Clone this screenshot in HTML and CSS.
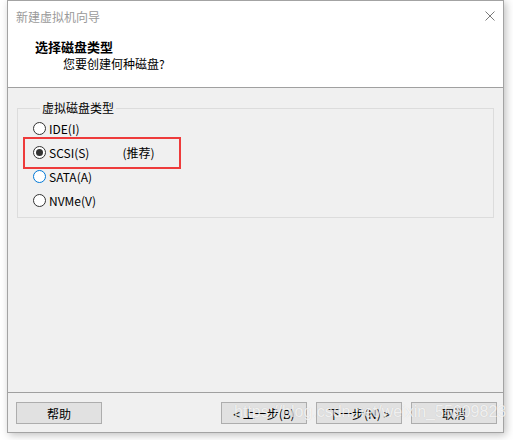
FILE: index.html
```html
<!DOCTYPE html>
<html lang="zh-CN">
<head>
    <meta charset="UTF-8">
    <title>新建虚拟机向导</title>
    <link rel="stylesheet" href="styles.css">
</head>
<body>
    <div class="wizard">
        <div class="wizard-header">
            <div class="title-bar">
                <span class="title">新建虚拟机向导</span>
                <svg class="close" viewBox="0 0 10 10">
                    <path d="M0.5 0.5 L9.5 9.5 M9.5 0.5 L0.5 9.5"></path>
                </svg>
            </div>
            <div class="step-title">选择磁盘类型</div>
            <div class="step-desc">您要创建何种磁盘?</div>
        </div>

        <div class="wizard-body">
            <fieldset class="group">
                <legend>虚拟磁盘类型</legend>
                <label class="radio"><span class="dot"></span>IDE(I)</label>
                <label class="radio checked"><span class="dot"></span>SCSI(S)<span class="hint">(推荐)</span><span class="mark"></span></label>
                <label class="radio focus"><span class="dot"></span>SATA(A)</label>
                <label class="radio"><span class="dot"></span>NVMe(V)</label>
            </fieldset>
        </div>

        <div class="wizard-footer">
            <button class="btn">帮助</button>
            <div class="spacer"></div>
            <button class="btn">&lt; 上一步(B)</button>
            <button class="btn">下一步(N) &gt;</button>
            <button class="btn cancel">取消</button>
            <div class="watermark">https://blog.csdn.net/weixin_55609823</div>
        </div>
    </div>
</body>
</html>
```

FILE: styles.css
```css
* {
    margin: 0;
    padding: 0;
    box-sizing: border-box;
    font-family: "Noto Sans CJK SC", "Open Sans", sans-serif;
}

body {
    background-color: #ffffff;
    width: 513px;
    height: 440px;
    overflow: hidden;
}

.wizard {
    margin-left: 7px;
    width: 497px;
    height: 433px;
    border: 1px solid #a3a3a3;
    background-color: #f0f0f0;
    box-shadow: 2px 2px 8px rgba(0, 0, 0, 0.25);
    display: flex;
    flex-direction: column;
    position: relative;
}

.wizard-header {
    background-color: #ffffff;
    height: 87px;
    border-bottom: 1px solid #a0a0a0;
}

.title-bar {
    display: flex;
    align-items: center;
    justify-content: space-between;
    height: 30px;
    padding: 0 8px 0 8px;
}

.title {
    font-size: 12px;
    color: #9a9a9a;
}

.close {
    width: 10px;
    height: 10px;
    stroke: #7a7a7a;
    stroke-width: 1;
    fill: none;
}

.step-title {
    margin: 7px 0 0 27px;
    font-size: 13px;
    font-weight: bold;
    color: #000;
    line-height: 17px;
}

.step-desc {
    margin: 0 0 0 55px;
    font-size: 12px;
    color: #000;
    line-height: 17px;
}

.wizard-body {
    flex: 1;
    padding: 12px 9px 0 9px;
}

.group {
    border: 1px solid #dcdcdc;
    height: 118px;
    padding: 0 0 0 15px;
}

.group legend {
    font-size: 12px;
    color: #000;
    padding: 0 2px;
    margin-left: 7px;
    line-height: 16px;
}

.radio {
    position: relative;
    display: flex;
    align-items: center;
    height: 24px;
    font-size: 12px;
    color: #000;
}

.dot {
    width: 13px;
    height: 13px;
    border: 1px solid #333;
    border-radius: 50%;
    background-color: #fff;
    margin-right: 3px;
    display: flex;
    align-items: center;
    justify-content: center;
}

.checked .dot::after {
    content: "";
    width: 7px;
    height: 7px;
    border-radius: 50%;
    background-color: #333;
}

.focus .dot {
    border-color: #0078d7;
}

.hint {
    margin-left: 33px;
}

.mark {
    position: absolute;
    left: -10px;
    top: -3px;
    width: 158px;
    height: 32px;
    border: 2px solid #ee3b3b;
}

.wizard-footer {
    position: relative;
    height: 40px;
    border-top: 1px solid #a0a0a0;
    display: flex;
    align-items: flex-start;
    gap: 10px;
    padding: 9px 6px 0 8px;
}

.spacer {
    flex: 1;
}

.btn {
    width: 86px;
    height: 22px;
    border: 1px solid #adadad;
    background-color: #e1e1e1;
    font-size: 12px;
    color: #000;
}

.wizard-footer .btn + .btn {
    margin-left: -1px;
}

.wizard-footer .cancel {
    margin-left: 1px;
}

.watermark {
    position: absolute;
    left: 226px;
    top: 10px;
    font-family: "Liberation Sans", sans-serif;
    font-size: 16px;
    color: rgba(255, 255, 255, 0.75);
    text-shadow: 0 0 1px rgba(0, 0, 0, 0.15);
    white-space: nowrap;
    pointer-events: none;
}
```
